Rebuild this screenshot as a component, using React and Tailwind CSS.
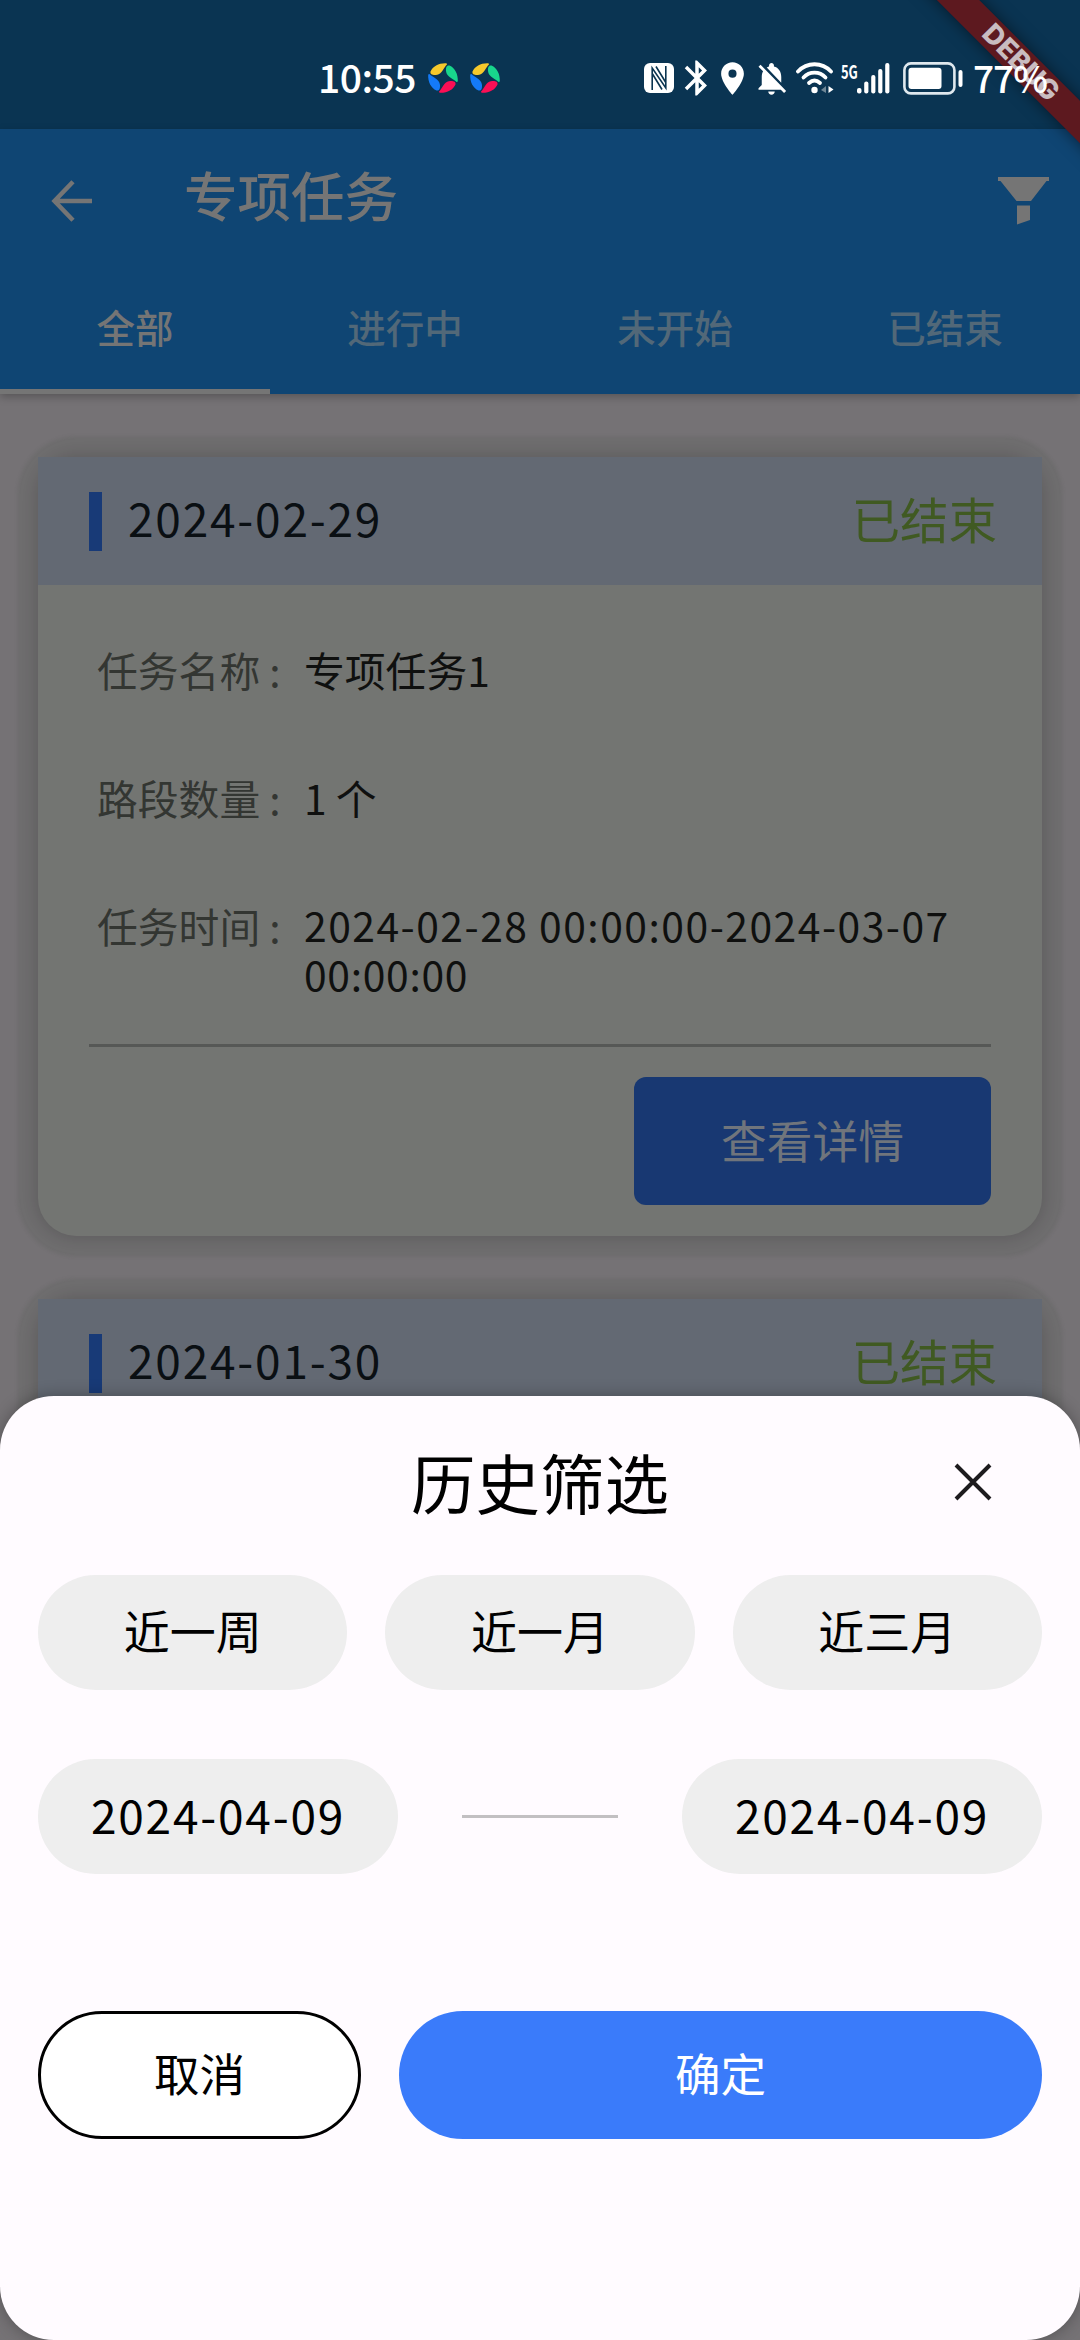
import React from "react";
import { MdBluetooth, MdLocationOn, MdNotificationsOff } from "react-icons/md";

const CJK = "font-['Noto_Sans_CJK_SC',sans-serif]";

function Swirl() {
  return (
    <svg className="h-[32px] w-[32px]" viewBox="0 0 32 32">
      <path d="M3.5 9.5C6 4 12 .8 19.500 1.200L20 2.500C17 4.500 15.500 12.500 9 13C5.500 13.200 3 12.500 3.500 9.500Z" fill="#f6c92c" />
      <path d="M22.500 3.500C28 6 31.200 12 30.800 19.500L29.500 20C27.500 17 19.500 15.500 19 9C18.800 5.500 19.500 3 22.500 3.500Z" fill="#18d68c" />
      <path d="M28.500 22.500C26 28 20 31.200 12.500 30.800L12 29.500C15 27.500 16.500 19.500 23 19C26.500 18.800 29 19.500 28.500 22.500Z" fill="#fb0f55" />
      <path d="M9.500 28.500C4 26 .8 20 1.200 12.500L2.500 12C4.500 15 12.500 16.500 13 23C13.200 26.500 12.500 29 9.500 28.500Z" fill="#147af8" />
    </svg>
  );
}

function Nfc() {
  return (
    <svg className="h-[30px] w-[30px]" viewBox="0 0 30 30">
      <rect width="30" height="30" rx="6" fill="#fff" />
      <path d="M8.200 27V5L21.800 25V3M8.200 10.500L18 26.500M12 3.500L21.800 19.500" fill="none" stroke="#0a3450" strokeWidth="1.600" />
    </svg>
  );
}

function Wifi() {
  return (
    <svg className="h-[32px] w-[38px]" viewBox="0 0 38 32">
      <g fill="none" stroke="#fff" strokeWidth="3.800" strokeLinecap="round">
        <path d="M2 9.500C11 -.2 26 -.2 35 9.500" />
        <path d="M7.500 15.500C13.500 9 23.500 9 29.500 15.500" />
        <path d="M13 21C16.500 17.800 20.500 17.800 24 21" />
      </g>
      <circle cx="18.500" cy="28" r="3.200" fill="#fff" />
      <path d="M30 24V31L25 28Z" fill="#6f8797" />
      <path d="M32.500 31V24L37.500 27.500Z" fill="#fff" />
    </svg>
  );
}

function Signal() {
  return (
    <svg className="h-[31px] w-[33px]" viewBox="0 0 33 31">
      <g fill="#fff">
        <rect x="0" y="25" width="4.500" height="5.500" rx="2" />
        <rect x="7.200" y="18.500" width="4.200" height="12" rx="2" />
        <rect x="14.200" y="12" width="4.200" height="18.500" rx="2" />
        <rect x="21.200" y="6" width="4.200" height="24.500" rx="2" />
        <rect x="28.200" y="0" width="4.200" height="30.500" rx="2" />
      </g>
    </svg>
  );
}

function Battery() {
  return (
    <svg className="h-[33px] w-[60px]" viewBox="0 0 60 33">
      <rect x="1.400" y="1.400" width="50" height="30" rx="6.500" fill="none" stroke="#dfe8ee" strokeWidth="2.600" />
      <rect x="5.500" y="5.800" width="33" height="21.200" rx="3" fill="#fff" />
      <rect x="55.500" y="8" width="4" height="17" rx="2" fill="#fff" />
    </svg>
  );
}

function StatusBar() {
  return (
    <div className="flex h-[129px] items-center bg-[#0a3452] pt-[27px] pl-[318px] text-white">
      <span className="-mt-[4px] w-[109px] text-[39px] leading-[40px] font-medium tracking-[-0.5px]">10:55</span>
      <div className="flex gap-[10px]">
        <Swirl />
        <Swirl />
      </div>
      <div className="ml-[143px] flex items-center">
        <Nfc />
        <MdBluetooth className="ml-[2px] h-[42px] w-[42px]" />
        <MdLocationOn className="-ml-[5px] h-[39px] w-[39px]" />
        <MdNotificationsOff className="h-[39px] w-[39px]" />
        <div className="ml-[5px]">
          <Wifi />
        </div>
        <span className="ml-[7px] h-[32px] w-[24px] origin-left scale-x-[0.68] text-[19px] leading-[18px] font-bold">5G</span>
        <div className="-ml-[8px]">
          <Signal />
        </div>
        <div className="ml-[13px]">
          <Battery />
        </div>
      </div>
    </div>
  );
}

const tabs = ["全部", "进行中", "未开始", "已结束"];

function Header() {
  return (
    <header className="relative h-[265px] bg-[#0f4573] text-[#757575] shadow-[0_3px_8px_rgba(0,0,0,0.25)]">
      <div className="flex h-[136px] items-center pr-[31px] pl-[51px]">
        <svg className="mt-[7px] h-[42px] w-[42px]" viewBox="0 0 42 42" fill="none" stroke="currentColor" strokeWidth="4.500">
          <path d="M22 1.800L3.500 21L22 40.200M3 21H41" />
        </svg>
        <h1 className="-mt-[6px] ml-[91px] flex-1 text-[53.500px] leading-[60px] font-medium">专项任务</h1>
        <svg className="mt-[7px] h-[48px] w-[51px]" viewBox="0 0 51 48" fill="currentColor">
          <path d="M0 0H51V4H48.500L33 24H18.500L2.500 4H0Z" />
          <path d="M19 28.500H32V43L19 47.500Z" />
        </svg>
      </div>
      <nav className="grid h-[129px] grid-cols-4">
        {tabs.map((t, i) => (
          <div
            key={t}
            className={
              i === 0
                ? "flex items-center justify-center border-b-[5px] border-[#757575] text-[38.500px] font-medium text-[#757575]"
                : "flex items-center justify-center border-b-[5px] border-transparent text-[38.500px] font-medium text-[#526878]"
            }
          >
            {t}
          </div>
        ))}
      </nav>
    </header>
  );
}

function Row({ label, children, className = "" }) {
  return (
    <div className="flex text-[40.800px] leading-[49px]">
      <span className="w-[207px] text-[#333632]">{label} :</span>
      <span className={"flex-1 whitespace-nowrap text-[#0f100f] " + className}>{children}</span>
    </div>
  );
}

function TaskCard({ date, children }) {
  return (
    <section className="rounded-[38px] bg-[#737572] shadow-[0_0_3px_21px_rgba(94,98,92,0.24),0_0_18px_2px_rgba(0,0,0,0.2)]">
      <div className="flex h-[128px] items-center bg-[#636973] pr-[45px] pl-[51px]">
        <div className="h-[59px] w-[13px] bg-[#183a77]" />
        <span className="-mt-[8px] ml-[26px] flex-1 text-[46px] tracking-[1.8px] text-[#0a0f13]">{date}</span>
        <span className="-mt-[6px] text-[48.500px] text-[#405a22]">已结束</span>
      </div>
      {children}
    </section>
  );
}

function TaskDetails({ name, count, start, end, endTime }) {
  return (
    <div className="px-[51px] pt-[60px] pb-[31px]">
      <div className="flex flex-col gap-[79px] pl-[8px]">
        <Row label="任务名称">{name}</Row>
        <Row label="路段数量">{count}</Row>
        <Row label="任务时间" className="-mt-[1px] mb-[1px] tracking-[1.5px]">
          {start}-{end}
          <br />
          <span className="tracking-[0.7px]">{endTime}</span>
        </Row>
      </div>
      <div className="mt-[45px] h-[3px] bg-[#565856]" />
      <div className="mt-[30px] flex justify-end">
        <button className="h-[128px] w-[357px] rounded-[12px] bg-[#183872] pb-[4px] text-[45.800px] text-[#70757c]">查看详情</button>
      </div>
    </div>
  );
}

function Pill({ children, className = "" }) {
  return (
    <button className={"h-[115px] rounded-full bg-[#eeeeee] text-[46px] text-black " + className}>{children}</button>
  );
}

function FilterSheet() {
  return (
    <div className="absolute inset-x-0 bottom-0 h-[944px] rounded-[54px] bg-[#fffbff] px-[38px] text-black shadow-[0_0_16px_rgba(0,0,0,0.3)]">
      <div className="grid h-[179px] grid-cols-[1fr_auto_1fr] items-center pb-[7px]">
        <h2 className="col-start-2 -mt-[2px] text-[64.500px] leading-[70px]">历史筛选</h2>
        <svg className="mr-[50px] h-[38px] w-[38px] justify-self-end" viewBox="0 0 38 38" fill="none" stroke="#1d1b1e" strokeWidth="4">
          <path d="M2 2L36 36M36 2L2 36" />
        </svg>
      </div>
      <div className="grid grid-cols-3 gap-[38px]">
        <Pill className="pb-[6px]">近一周</Pill>
        <Pill className="pb-[6px]">近一月</Pill>
        <Pill className="pb-[6px]">近三月</Pill>
      </div>
      <div className="mt-[69px] flex items-center justify-between">
        <Pill className="w-[360px] pb-[5px] tracking-[1.8px]">2024-04-09</Pill>
        <div className="h-[3px] w-[156px] bg-[#c2c0c2]" />
        <Pill className="w-[360px] pb-[5px] tracking-[1.8px]">2024-04-09</Pill>
      </div>
      <div className="mt-[137px] flex gap-[38px]">
        <button className="h-[128px] w-[323px] rounded-full border-[3px] border-black bg-white pb-[6px] text-[45.500px]">取消</button>
        <button className="h-[128px] flex-1 rounded-full bg-[#3a7bfa] pb-[6px] text-[45.500px] text-white">确定</button>
      </div>
    </div>
  );
}

export default function App() {
  return (
    <div className={"relative h-[2340px] w-[1080px] overflow-hidden bg-[#757275] " + CJK}>
      <StatusBar />
      <Header />
      <main className="flex flex-col gap-[63px] px-[38px] pt-[63px]">
        <TaskCard date="2024-02-29">
          <TaskDetails name="专项任务1" count="1 个" start="2024-02-28 00:00:00" end="2024-03-07" endTime="00:00:00" />
        </TaskCard>
        <TaskCard date="2024-01-30">
          <div className="h-[650px]" />
        </TaskCard>
      </main>
      <FilterSheet />
      <div className="absolute top-[46px] left-[869px] flex h-[30px] w-[300px] rotate-45 items-center justify-center bg-[#5d191f] pl-[5px] font-['Inter',sans-serif] text-[27.500px] font-extrabold text-[#c9bcc0] shadow-[0_0_16px_rgba(0,0,0,0.5)]">
        DEBUG
      </div>
      <span className="absolute top-[57px] left-[973px] text-[37px] leading-[40px] font-medium tracking-[-1px] text-white">77%</span>
    </div>
  );
}
